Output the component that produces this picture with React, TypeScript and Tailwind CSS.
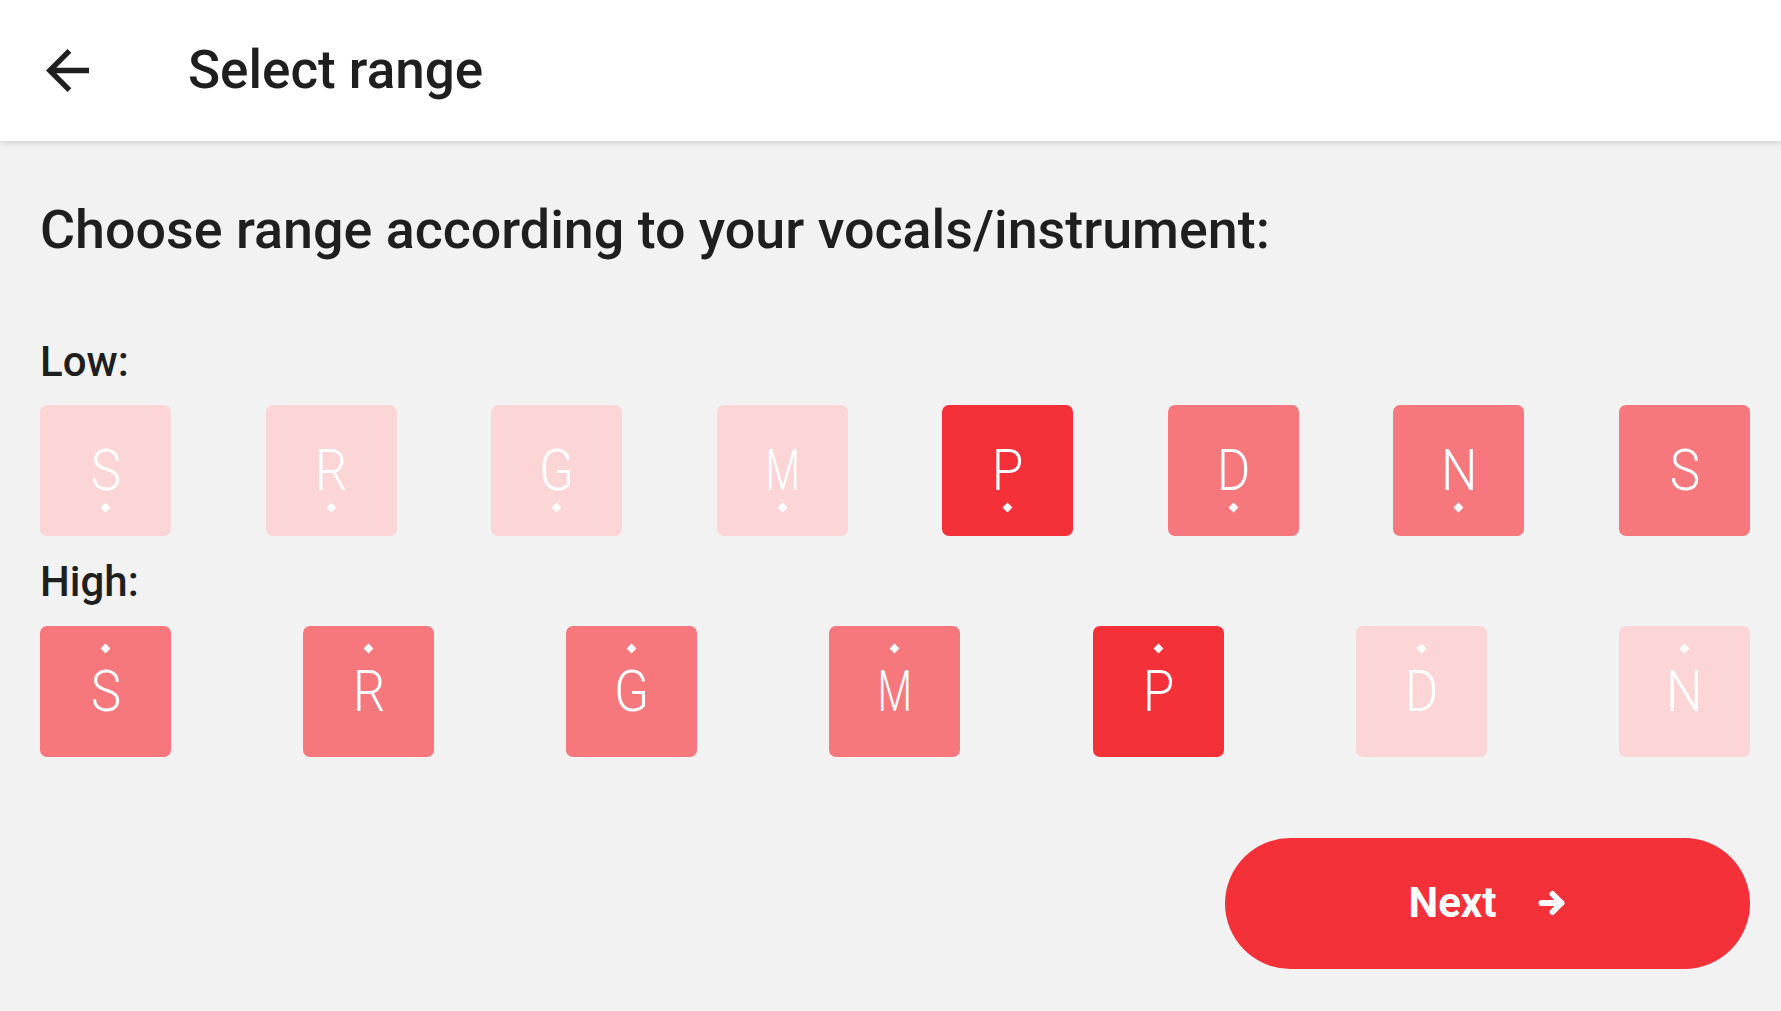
import React from "react";

type Level = "light" | "mid" | "sel";

const bgFor: Record<Level, string> = {
  light: "bg-[#fcd6d7]",
  mid: "bg-[#f6787c]",
  sel: "bg-[#f43039]",
};

function NoteBox({ note, level, dot }: { note: string; level: Level; dot: "top" | "bottom" | "none" }) {
  return (
    <div className={`relative w-[131px] h-[131px] rounded-[7px] flex items-center justify-center ${bgFor[level]}`}>
      <span
        className={`text-white leading-none text-[57px] font-light ${note === "M" ? "scale-x-[0.7]" : "scale-x-[0.9]"}`}
        style={{ fontFamily: "Roboto, 'Noto Sans', sans-serif" }}
      >
        {note}
      </span>
      {dot === "top" && (
        <span className="absolute left-1/2 top-[19px] -ml-[3.5px] w-[7px] h-[7px] bg-white rotate-45" />
      )}
      {dot === "bottom" && (
        <span className="absolute left-1/2 top-[99px] -ml-[3.5px] w-[7px] h-[7px] bg-white rotate-45" />
      )}
    </div>
  );
}

const low: { n: string; l: Level; d: "top" | "bottom" | "none" }[] = [
  { n: "S", l: "light", d: "bottom" },
  { n: "R", l: "light", d: "bottom" },
  { n: "G", l: "light", d: "bottom" },
  { n: "M", l: "light", d: "bottom" },
  { n: "P", l: "sel", d: "bottom" },
  { n: "D", l: "mid", d: "bottom" },
  { n: "N", l: "mid", d: "bottom" },
  { n: "S", l: "mid", d: "none" },
];

const high: { n: string; l: Level; d: "top" | "bottom" | "none" }[] = [
  { n: "S", l: "mid", d: "top" },
  { n: "R", l: "mid", d: "top" },
  { n: "G", l: "mid", d: "top" },
  { n: "M", l: "mid", d: "top" },
  { n: "P", l: "sel", d: "top" },
  { n: "D", l: "light", d: "top" },
  { n: "N", l: "light", d: "top" },
];

export default function App() {
  return (
    <div
      className="w-[1781px] h-[1011px] bg-[#f2f2f2] flex flex-col overflow-hidden text-[#212121]"
      style={{ fontFamily: "Roboto, 'Noto Sans', sans-serif" }}
    >
      <header className="relative z-10 h-[141px] shrink-0 bg-white flex items-center shadow-[0_2px_6px_rgba(0,0,0,0.14)]">
        <div className="w-[188px] pl-[46px] flex items-center">
          <svg width="43" height="43" viewBox="4 4 16 16" fill="#1f1f1f">
            <path d="M20 11H7.83l5.59-5.59L12 4l-8 8 8 8 1.41-1.41L7.83 13H20v-2z" />
          </svg>
        </div>
        <h1 className="text-[53px] leading-none font-medium text-[#1f1f1f]">Select range</h1>
      </header>

      <main className="flex flex-col pl-[40px] pr-[31px]">
        <h2 className="mt-[62px] text-[53.8px] leading-none font-medium text-[#1f1f1f]">
          Choose range according to your vocals/instrument:
        </h2>

        <div className="mt-[84px] text-[42px] leading-none font-medium text-[#1f1f1f]">Low:</div>
        <div className="mt-[22px] flex justify-between">
          {low.map((b, i) => (
            <NoteBox key={i} note={b.n} level={b.l} dot={b.d} />
          ))}
        </div>

        <div className="mt-[25px] text-[42px] leading-none font-medium text-[#1f1f1f]">High:</div>
        <div className="mt-[23px] flex justify-between">
          {high.map((b, i) => (
            <NoteBox key={i} note={b.n} level={b.l} dot={b.d} />
          ))}
        </div>

        <button className="mt-[81px] self-end w-[525px] h-[131px] rounded-full bg-[#f43039] flex items-center justify-center gap-[42px] text-white">
          <span className="text-[42px] leading-none font-bold">Next</span>
          <svg width="28" height="26" viewBox="0 0 28 26" fill="none" stroke="white" strokeWidth="6" strokeLinecap="round" strokeLinejoin="round">
            <path d="M3.5 13H23.5M14.5 4L23.5 13L14.5 22" />
          </svg>
        </button>
      </main>
    </div>
  );
}
